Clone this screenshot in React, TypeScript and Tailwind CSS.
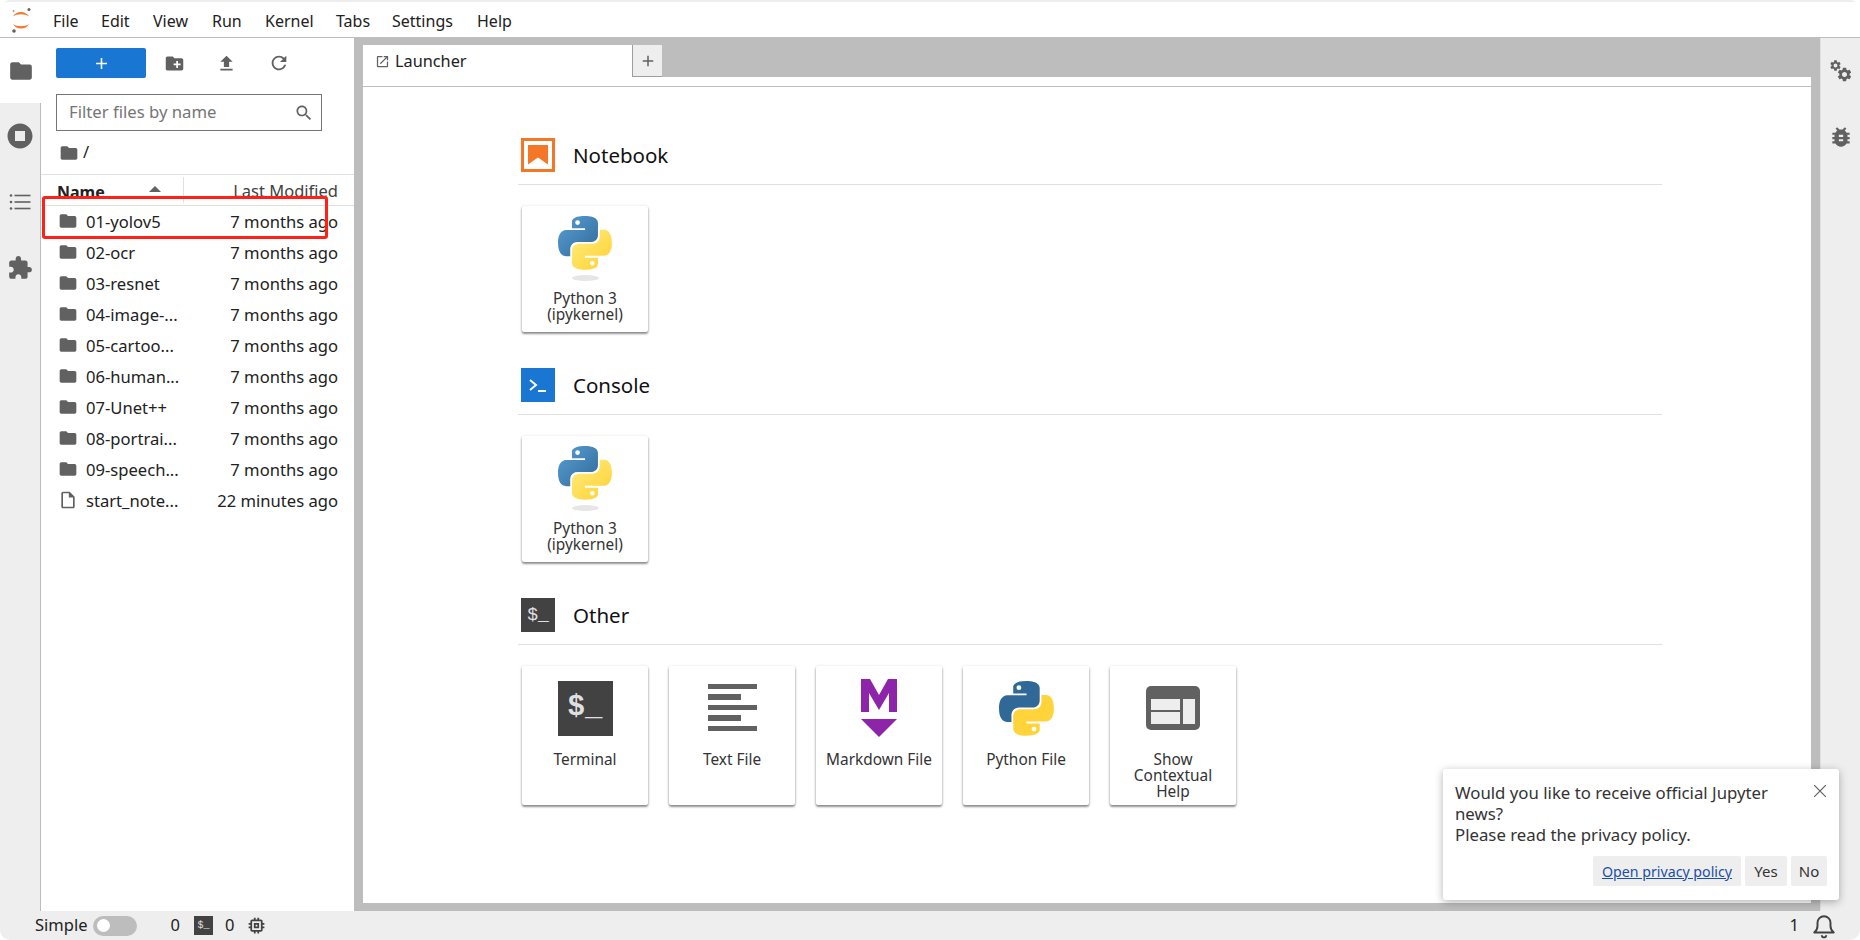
import type { ReactNode } from "react";

const folderPath = "M10 4H4c-1.1 0-1.99.9-1.99 2L2 18c0 1.1.9 2 2 2h16c1.1 0 2-.9 2-2V8c0-1.1-.9-2-2-2h-8l-2-2z";
const gearPath =
  "M19.14 12.94c.04-.3.06-.61.06-.94 0-.32-.02-.64-.07-.94l2.03-1.58c.18-.14.23-.41.12-.61l-1.92-3.32c-.12-.22-.37-.29-.59-.22l-2.39.96c-.5-.38-1.03-.7-1.62-.94l-.36-2.54c-.04-.24-.24-.41-.48-.41h-3.84c-.24 0-.43.17-.47.41l-.36 2.54c-.59.24-1.13.57-1.62.94l-2.39-.96c-.22-.08-.47 0-.59.22L2.74 8.87c-.12.21-.08.47.12.61l2.03 1.58c-.05.3-.09.63-.09.94s.02.64.07.94l-2.03 1.58c-.18.14-.23.41-.12.61l1.92 3.32c.12.22.37.29.59.22l2.39-.96c.5.38 1.03.7 1.62.94l.36 2.54c.05.24.24.41.48.41h3.84c.24 0 .44-.17.47-.41l.36-2.54c.59-.24 1.13-.56 1.62-.94l2.39.96c.22.08.47 0 .59-.22l1.92-3.32c.12-.22.07-.47-.12-.61l-2.01-1.58zM12 15.6c-1.98 0-3.6-1.62-3.6-3.6s1.62-3.6 3.6-3.6 3.6 1.62 3.6 3.6-1.62 3.6-3.6 3.6z";

const menus = [
  { label: "File", w: "w-[48px]" },
  { label: "Edit", w: "w-[52px]" },
  { label: "View", w: "w-[59px]" },
  { label: "Run", w: "w-[53px]" },
  { label: "Kernel", w: "w-[71px]" },
  { label: "Tabs", w: "w-[56px]" },
  { label: "Settings", w: "w-[85px]" },
  { label: "Help", w: "w-[50px]" },
];

const files = [
  { name: "01-yolov5", time: "7 months ago" },
  { name: "02-ocr", time: "7 months ago" },
  { name: "03-resnet", time: "7 months ago" },
  { name: "04-image-...", time: "7 months ago" },
  { name: "05-cartoo...", time: "7 months ago" },
  { name: "06-human...", time: "7 months ago" },
  { name: "07-Unet++", time: "7 months ago" },
  { name: "08-portrai...", time: "7 months ago" },
  { name: "09-speech...", time: "7 months ago" },
  { name: "start_note...", time: "22 minutes ago", isFile: true },
];

function Icon({ d, className }: { d: string; className: string }) {
  return (
    <svg viewBox="0 0 24 24" className={className} fill="currentColor">
      <path d={d} />
    </svg>
  );
}

function PythonLogo({ flat, className }: { flat?: boolean; className: string }) {
  const id = flat ? "flat" : "grad";
  return (
    <svg viewBox="0 0 256 255" className={className}>
      <defs>
        <linearGradient id={`${id}-b`} x1="0" y1="0" x2="1" y2="1">
          <stop offset="0" stopColor="#5a9fd4" />
          <stop offset="1" stopColor="#306998" />
        </linearGradient>
        <linearGradient id={`${id}-y`} x1="0.2" y1="0.2" x2="0.8" y2="0.9">
          <stop offset="0" stopColor="#ffe873" />
          <stop offset="1" stopColor="#ffd43b" />
        </linearGradient>
      </defs>
      <path
        fill={flat ? "#306998" : `url(#${id}-b)`}
        d="M126.916.072c-64.832 0-60.784 28.115-60.784 28.115l.072 29.128h61.868v8.745H41.631S.145 61.355.145 126.77c0 65.417 36.21 63.097 36.21 63.097h21.61v-30.356s-1.165-36.21 35.632-36.21h61.362s34.475.557 34.475-33.319V33.97S194.67.072 126.916.072zM92.802 19.66a11.12 11.12 0 0 1 11.13 11.13 11.12 11.12 0 0 1-11.13 11.13 11.12 11.12 0 0 1-11.13-11.13 11.12 11.12 0 0 1 11.13-11.13z"
      />
      <path
        fill={flat ? "#ffd43b" : `url(#${id}-y)`}
        d="M128.757 254.126c64.832 0 60.784-28.115 60.784-28.115l-.072-29.127H127.6v-8.745h86.441s41.486 4.705 41.486-60.712c0-65.416-36.21-63.096-36.21-63.096h-21.61v30.355s1.165 36.21-35.632 36.21h-61.362s-34.475-.557-34.475 33.32v56.013s-5.235 33.897 62.518 33.897zm34.114-19.586a11.12 11.12 0 0 1-11.13-11.13 11.12 11.12 0 0 1 11.13-11.131 11.12 11.12 0 0 1 11.13 11.13 11.12 11.12 0 0 1-11.13 11.13z"
      />
    </svg>
  );
}

function TerminalBox({ className, textClass }: { className: string; textClass: string }) {
  return (
    <div className={`flex items-center justify-center bg-[#424242] font-['Liberation_Mono',monospace] text-[#e0e0e0] ${className} ${textClass}`}>
      $_
    </div>
  );
}

function Card({ label, icon }: { label: ReactNode; icon: ReactNode }) {
  return (
    <div className="flex h-[139px] w-[126px] flex-col items-center rounded-[2px] bg-white pt-[14px] shadow-[0_1px_3px_rgba(0,0,0,0.3),0_2px_2px_rgba(0,0,0,0.3)]">
      <div className="flex h-[56px] items-center justify-center">{icon}</div>
      <div className="mt-[16px] text-center text-[15.4px] leading-[16px] text-[#333]">{label}</div>
    </div>
  );
}

function KernelCard() {
  return (
    <div className="flex h-[126px] w-[126px] flex-col items-center rounded-[2px] bg-white pt-[1px] shadow-[0_1px_3px_rgba(0,0,0,0.3),0_2px_2px_rgba(0,0,0,0.3)]">
      <div className="flex h-[76px] flex-col items-center">
        <PythonLogo className="mt-[9px] h-[54px] w-[54px]" />
        <div className="mt-[5px] h-[6px] w-[27px] rounded-[50%] bg-[#e6e6e6]" />
      </div>
      <div className="mt-[8px] text-center text-[15.4px] leading-[16px] text-[#333]">
        Python 3
        <br />
        (ipykernel)
      </div>
    </div>
  );
}

function Section({ icon, title, children }: { icon: ReactNode; title: string; children: ReactNode }) {
  return (
    <section className="h-[230px]">
      <div className="flex h-[47px] items-start border-b border-[#e0e0e0] pl-[3px]">
        {icon}
        <h2 className="ml-[18px] text-[20.5px] leading-[34px] text-[#111]">{title}</h2>
      </div>
      <div className="flex gap-[21px] pl-[4px] pt-[21px]">{children}</div>
    </section>
  );
}

export default function App() {
  return (
    <div className="relative flex h-[940px] w-[1860px] flex-col overflow-hidden rounded-[10px] bg-white font-['Noto_Sans',sans-serif] text-[#212121]">
      {/* Menu bar */}
      <header className="flex h-[38px] shrink-0 items-center border-b border-t-2 border-b-[#bdbdbd] border-t-[#eeeeee] bg-white">
        <div className="flex w-[41px] justify-center">
          <svg viewBox="0 0 24 28" className="h-[28px] w-[24px]">
            <path d="M4 10.500c3-6 13-6 16 0-4-3-12-3-16 0z" fill="#f37726" />
            <path d="M4 18c3 6 13 6 16 0-4 3-12 3-16 0z" fill="#f37726" />
            <circle cx="20" cy="3.500" r="1.500" fill="#616161" />
            <circle cx="4.500" cy="5" r="1" fill="#9e9e9e" />
            <circle cx="5" cy="25" r="1.800" fill="#616161" />
          </svg>
        </div>
        <nav className="flex pl-[12px] pt-[2px] text-[16px]">
          {menus.map((m) => (
            <span key={m.label} className={m.w}>
              {m.label}
            </span>
          ))}
        </nav>
      </header>

      <div className="flex min-h-0 flex-1">
        {/* Activity bar */}
        <aside className="flex w-[41px] shrink-0 flex-col items-center border-r border-[#bdbdbd] bg-[#eeeeee] text-[#616161]">
          <div className="-mr-[1px] flex h-[65px] w-[41px] items-center justify-center self-start bg-white">
            <Icon d={folderPath} className="h-[26px] w-[26px]" />
          </div>
          <div className="flex h-[66px] items-center justify-center">
            <Icon d="M12 2C6.48 2 2 6.480 2 12s4.480 10 10 10 10-4.480 10-10S17.520 2 12 2zm4 14H8V8h8v8z" className="h-[30px] w-[30px]" />
          </div>
          <div className="flex h-[66px] items-center justify-center">
            <svg viewBox="0 0 24 24" className="h-[24px] w-[24px]" fill="currentColor">
              <circle cx="3" cy="5.500" r="1.300" />
              <circle cx="3" cy="12" r="1.300" />
              <circle cx="3" cy="18.500" r="1.300" />
              <rect x="6.500" y="4.700" width="16" height="1.600" />
              <rect x="6.500" y="11.200" width="16" height="1.600" />
              <rect x="6.500" y="17.700" width="16" height="1.600" />
            </svg>
          </div>
          <div className="flex h-[66px] items-center justify-center">
            <Icon
              d="M20.5 11H19V7c0-1.100-.9-2-2-2h-4V3.500C13 2.120 11.880 1 10.500 1S8 2.120 8 3.500V5H4c-1.100 0-1.990.9-1.990 2v3.800H3.500c1.490 0 2.700 1.210 2.700 2.700s-1.210 2.700-2.700 2.700H2V20c0 1.100.9 2 2 2h3.800v-1.500c0-1.490 1.210-2.700 2.700-2.700 1.490 0 2.700 1.210 2.700 2.700V22H17c1.100 0 2-.9 2-2v-4h1.500c1.380 0 2.500-1.120 2.500-2.500S21.880 11 20.500 11z"
              className="h-[26px] w-[26px]"
            />
          </div>
        </aside>

        {/* File browser */}
        <div className="flex w-[313px] shrink-0 flex-col bg-white">
          <div className="flex h-[56px] shrink-0 items-start pl-[15px] pt-[10px] text-[#616161]">
            <button className="flex h-[30px] w-[90px] items-center justify-center rounded-[2px] bg-[#1976d2] text-white">
              <Icon d="M19 13h-6v6h-2v-6H5v-2h6V5h2v6h6v2z" className="h-[19px] w-[19px]" />
            </button>
            <div className="ml-[11px] flex h-[30px] w-[34px] items-center justify-center">
              <Icon d="M20 6h-8l-2-2H4c-1.100 0-1.990.9-1.990 2L2 18c0 1.100.9 2 2 2h16c1.100 0 2-.9 2-2V8c0-1.100-.9-2-2-2zm-1 8h-3v3h-2v-3h-3v-2h3V9h2v3h3v2z" className="h-[21px] w-[21px]" />
            </div>
            <div className="ml-[27px] flex h-[30px] w-[16px] items-center justify-center">
              <Icon d="M9 16h6v-6h4l-7-7-7 7h4zm-4 2h14v2H5z" className="h-[21px] w-[21px] shrink-0" />
            </div>
            <div className="ml-[37px] flex h-[30px] w-[16px] items-center justify-center">
              <Icon d="M17.650 6.350C16.200 4.900 14.210 4 12 4c-4.420 0-7.990 3.580-7.990 8s3.570 8 7.990 8c3.730 0 6.840-2.550 7.730-6h-2.080c-.82 2.330-3.040 4-5.650 4-3.310 0-6-2.690-6-6s2.690-6 6-6c1.660 0 3.140.69 4.220 1.780L13 11h7V4l-2.350 2.350z" className="h-[22px] w-[22px] shrink-0" />
            </div>
          </div>
          <div className="ml-[15px] flex h-[37px] w-[266px] shrink-0 items-center justify-between border border-[#757575] pl-[12px] pr-[7px]">
            <span className="pb-[2px] text-[16.7px] leading-[24px] text-[#757575]">Filter files by name</span>
            <Icon d="M15.500 14h-.79l-.28-.27C15.410 12.590 16 11.110 16 9.500 16 5.910 13.090 3 9.500 3S3 5.910 3 9.500 5.910 16 9.500 16c1.610 0 3.090-.59 4.230-1.570l.27.28v.79l5 4.990L20.490 19l-4.990-5zm-6 0C7.010 14 5 11.990 5 9.500S7.010 5 9.500 5 14 7.010 14 9.500 11.990 14 9.500 14z" className="h-[20px] w-[20px] text-[#616161]" />
          </div>
          <div className="flex h-[43px] shrink-0 items-center pl-[18px] text-[#616161]">
            <Icon d={folderPath} className="h-[20px] w-[20px]" />
            <span className="ml-[4px] text-[16.5px] text-[#212121]">/</span>
          </div>
          <div className="flex h-[32px] shrink-0 items-center overflow-hidden border-y border-[#e0e0e0] pl-[16px] pr-[16px]">
            <span className="w-[68px] pt-[3px] text-[16px] font-bold">Name</span>
            <span className="ml-[24px] mt-[-2px] h-0 w-0 border-x-[6px] border-b-[6px] border-x-transparent border-b-[#616161]" />
            <span className="ml-[22px] h-[26px] border-l border-[#e0e0e0]" />
            <span className="flex-1 pt-[3px] text-right text-[16.500px] text-[#424242]">Last Modified</span>
          </div>
          <ul className="flex flex-col">
            {files.map((f) => (
              <li key={f.name} className="flex h-[31px] items-center justify-between pl-[17px] pr-[16px] text-[16.6px]">
                <span className="flex items-center">
                  {f.isFile ? (
                    <Icon d="M14 2H6c-1.100 0-1.990.9-1.990 2L4 20c0 1.100.89 2 1.990 2H18c1.100 0 2-.9 2-2V8l-6-6zm4 18H6V4h7v5h5v11z" className="h-[20px] w-[20px] text-[#616161]" />
                  ) : (
                    <Icon d={folderPath} className="h-[20px] w-[20px] text-[#616161]" />
                  )}
                  <span className="ml-[8px] pt-[1px]">{f.name}</span>
                </span>
                <span className="pt-[1px]">{f.time}</span>
              </li>
            ))}
          </ul>
        </div>

        {/* Main dock */}
        <main className="flex min-w-0 flex-1 flex-col bg-[#bdbdbd] pb-[8px] pl-[9px] pr-[9px] pt-[7px]">
          <div className="flex h-[32px] shrink-0">
            <div className="flex h-full w-[269px] items-center bg-white pl-[12px] text-[16.3px]">
              <Icon d="M19 19H5V5h7V3H5c-1.110 0-2 .9-2 2v14c0 1.100.89 2 2 2h14c1.100 0 2-.9 2-2v-7h-2v7zM14 3v2h3.590l-9.830 9.830 1.410 1.410L19 6.410V10h2V3h-7z" className="h-[15px] w-[15px] text-[#616161]" />
              <span className="ml-[5px]">Launcher</span>
            </div>
            <div className="flex h-full w-[30px] items-center justify-center border-l border-b border-[#9e9e9e] bg-[#eeeeee] text-[#616161]">
              <Icon d="M19 13h-6v6h-2v-6H5v-2h6V5h2v6h6v2z" className="h-[18px] w-[18px]" />
            </div>
          </div>
          <div className="h-[10px] shrink-0 border-b border-[#bdbdbd] bg-white" />
          <div className="min-h-0 flex-1 bg-white pl-[155px] pr-[149px] pt-[51px]">
            <Section
              title="Notebook"
              icon={
                <div className="flex h-[34px] w-[34px] items-center justify-center border-[3px] border-[#f37726]">
                  <svg viewBox="0 0 20 20" className="h-[20px] w-[20px] shrink-0">
                    <path d="M0 0h20v19.500L10 12.500 0 19.500z" fill="#f37726" />
                  </svg>
                </div>
              }
            >
              <KernelCard />
            </Section>
            <Section
              title="Console"
              icon={
                <div className="flex h-[34px] w-[34px] items-center justify-center bg-[#1976d2]">
                  <svg viewBox="0 0 24 24" className="h-[24px] w-[24px]" fill="none" stroke="#fff" strokeWidth="2">
                    <path d="M4 7l6 5-6 5" />
                    <path d="M12 18h8" />
                  </svg>
                </div>
              }
            >
              <KernelCard />
            </Section>
            <Section
              title="Other"
              icon={<TerminalBox className="h-[34px] w-[34px]" textClass="text-[18px] leading-none" />}
            >
              <Card label="Terminal" icon={<TerminalBox className="h-[55px] w-[55px]" textClass="text-[29px] font-bold" />} />
              <Card
                label="Text File"
                icon={
                  <div className="flex h-[49px] w-[49px] flex-col gap-[5px]">
                    <div className="h-[5.500px] w-[49px] bg-[#616161]" />
                    <div className="h-[5.500px] w-[33px] bg-[#616161]" />
                    <div className="h-[5.500px] w-[49px] bg-[#616161]" />
                    <div className="h-[5.500px] w-[33px] bg-[#616161]" />
                    <div className="h-[5.500px] w-[49px] bg-[#616161]" />
                  </div>
                }
              />
              <Card
                label="Markdown File"
                icon={
                  <svg viewBox="0 0 36 58" className="h-[58px] w-[36px]" fill="#8e24aa">
                    <path d="M0 33V0h9l9 16 9-16h9v33h-8V14L18 31 8 14v19z" />
                    <path d="M0 40h36L18 58z" />
                  </svg>
                }
              />
              <Card label="Python File" icon={<PythonLogo flat className="h-[55px] w-[55px]" />} />
              <Card
                label={
                  <>
                    Show
                    <br />
                    Contextual
                    <br />
                    Help
                  </>
                }
                icon={
                  <svg viewBox="0 0 54 44" className="h-[44px] w-[54px]">
                    <rect width="54" height="44" rx="5" fill="#616161" />
                    <rect x="5" y="13" width="29" height="11" fill="#eeeeee" />
                    <rect x="5" y="26" width="29" height="12" fill="#eeeeee" />
                    <rect x="37" y="13" width="12" height="25" fill="#eeeeee" />
                  </svg>
                }
              />
            </Section>
          </div>
        </main>

        {/* Right bar */}
        <aside className="flex w-[40px] shrink-0 flex-col items-center border-l border-[#e0e0e0] bg-[#eeeeee] text-[#616161]">
          <div className="relative mt-[21px] h-[24px] w-[24px]">
            <Icon d={gearPath} className="absolute left-0 top-0 h-[13px] w-[13px]" />
            <Icon d={gearPath} className="absolute bottom-0 right-0 h-[17px] w-[17px]" />
          </div>
          <Icon
            d="M20 8h-2.810c-.45-.78-1.070-1.450-1.820-1.960L17 4.410 15.590 3l-2.170 2.170C12.960 5.060 12.490 5 12 5c-.49 0-.96.06-1.410.17L8.410 3 7 4.410l1.620 1.630C7.880 6.550 7.260 7.220 6.810 8H4v2h2.090c-.05.33-.09.66-.09 1v1H4v2h2v1c0 .34.04.67.09 1H4v2h2.810c1.040 1.790 2.970 3 5.190 3s4.150-1.210 5.190-3H20v-2h-2.090c.05-.33.09-.66.09-1v-1h2v-2h-2v-1c0-.34-.04-.67-.09-1H20V8zm-6 8h-4v-2h4v2zm0-4h-4v-2h4v2z"
            className="mt-[41px] h-[26px] w-[26px]"
          />
        </aside>
      </div>

      {/* Status bar */}
      <footer className="flex h-[29px] shrink-0 items-center bg-[#eeeeee] pl-[35px] pr-[23px] text-[16.5px]">
        <span>Simple</span>
        <span className="ml-[6px] flex h-[20px] w-[44px] items-center rounded-full bg-[#bdbdbd] pl-[4px]">
          <span className="h-[13px] w-[13px] rounded-full bg-white" />
        </span>
        <span className="ml-[33px]">0</span>
        <TerminalBox className="ml-[14px] h-[19px] w-[19px]" textClass="text-[10px]" />
        <span className="ml-[12px]">0</span>
        <Icon d="M15 9H9v6h6V9zm-2 4h-2v-2h2v2zm8-2V9h-2V7c0-1.100-.9-2-2-2h-2V3h-2v2h-2V3H9v2H7c-1.100 0-2 .9-2 2v2H3v2h2v2H3v2h2v2c0 1.100.9 2 2 2h2v2h2v-2h2v2h2v-2h2c1.100 0 2-.9 2-2v-2h2v-2h-2v-2h2zm-4 6H7V7h10v10z" className="ml-[12px] h-[21px] w-[21px] text-[#424242]" />
        <span className="ml-auto">1</span>
        <svg viewBox="0 0 24 24" className="ml-[12px] h-[26px] w-[26px]" fill="none" stroke="#424242" strokeWidth="1.800">
          <path d="M3 18c2-1.500 3-3 3-6V9a6 6 0 0 1 12 0v3c0 3 1 4.500 3 6z" strokeLinejoin="round" />
          <path d="M10 20.500a2 2 0 0 0 4 0" />
        </svg>
      </footer>

      {/* Red highlight */}
      <div className="pointer-events-none absolute left-[42px] top-[196px] h-[43px] w-[286px] rounded-[3px] border-[3px] border-[#ff2018]" />

      {/* Notification */}
      <div className="absolute left-[1443px] top-[769px] h-[131px] w-[396px] rounded-[3px] bg-white px-[12px] pt-[13px] text-[16.8px] leading-[21px] text-[#333] shadow-[0_2px_8px_rgba(0,0,0,0.3)]">
        <svg viewBox="0 0 12 12" className="absolute right-[13px] top-[16px] h-[12px] w-[12px]" stroke="#616161" strokeWidth="1.200">
          <path d="M0 0l12 12M12 0L0 12" />
        </svg>
        <p className="w-[340px]">Would you like to receive official Jupyter news?</p>
        <p>Please read the privacy policy.</p>
        <div className="mt-[11px] flex justify-end gap-[4px] text-[14.200px]">
          <span className="flex h-[30px] w-[148px] items-center justify-center rounded-[2px] bg-[#eeeeee] text-[#1a4fa8] underline">Open privacy policy</span>
          <span className="flex h-[30px] w-[42px] items-center justify-center rounded-[2px] bg-[#eeeeee] text-[15px]">Yes</span>
          <span className="flex h-[30px] w-[36px] items-center justify-center rounded-[2px] bg-[#eeeeee] text-[15px]">No</span>
        </div>
      </div>
    </div>
  );
}
